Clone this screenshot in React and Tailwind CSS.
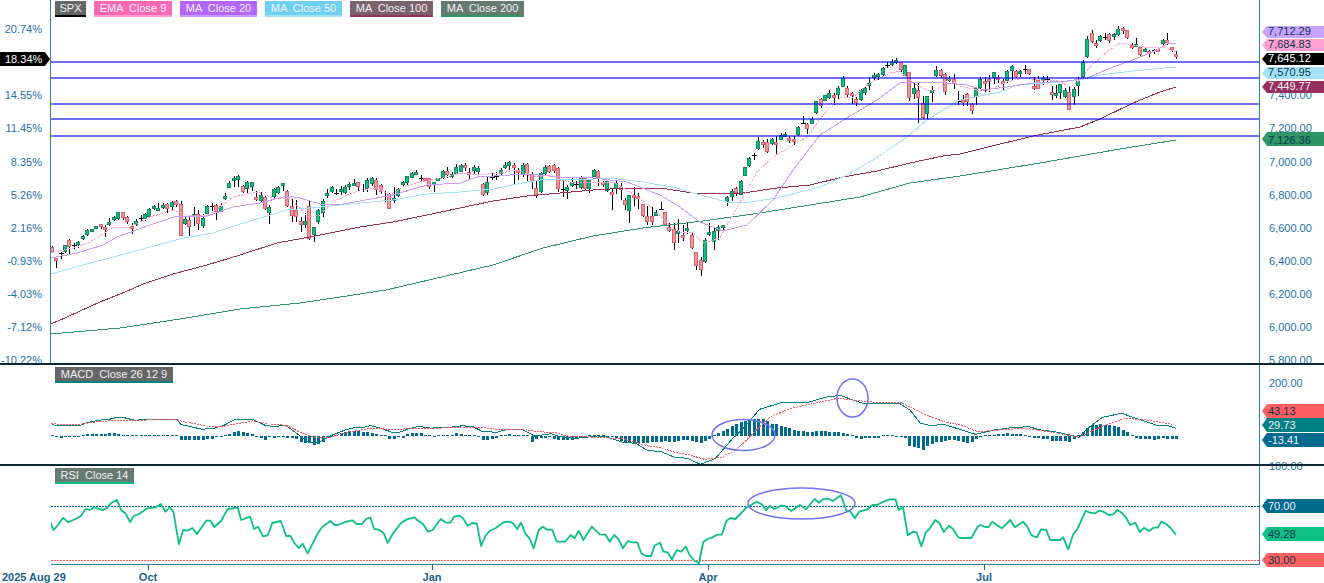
import React from 'react';

const barsA = `r 350 365 348 367|r 384 394 384 415|d 370 365 385|g 344 366 344 368|r 331 352 328 372|d 346 338 355|g 337 344 334 356|g 319 328 315 330|g 301 317 297 319|g 298 302 298 302|g 287 292 287 292|r 283 293 281 296|r 292 296 285 320|g 276 281 265 288|g 262 271 259 275|g 247 268 245 270|r 247 266 245 270|r 260 275 257 280|r 288 293 278 312|g 274 286 268 288|d 264 256 273|g 251 265 248 272|g 238 262 235 265|g 229 238 226 240|g 234 238 220 242|g 225 229 218 235|r 222 238 218 247|g 217 233 214 240|r 214 226 210 230|r 223 319 214 320|g 268 283 262 286|r 271 292 260 318|g 251 258 232 290|r 251 281 240 300|g 265 289 252 295|g 227 250 224 252|d 227 220 245|r 224 246 222 270|g 227 244 220 248|g 198 208 188 210|g 158 173 154 175|g 145 151 138 170|g 139 152 135 170|r 167 185 165 188|g 155 176 153 190|g 155 170 155 182|r 202 210 182 212|g 195 212 186 218|r 201 236 196 242|g 230 247 225 282|g 178 201 174 210|g 172 189 168 192|g 160 170 158 182|r 182 227 180 232|r 229 260 207 275|r 239 260 209 276|r 274 287 262 308|g 273 284 248 292|r 227 326 209 330|g 292 317 290 335|g 241 278 238 282|g 212 248 208 262|g 190 200 178 205|g 170 184 168 188|d 188 178 196|g 178 183 168 195|g 170 188 165 192|g 163 168 155 180|g 160 164 148 170|r 157 172 155 183|d 177 163 187|g 151 177 145 186|g 145 164 142 170|r 151 181 143 195|r 166 188 162 192|d 197 183 215|r 192 236 190 237|g 204 209 170 218|g 178 200 175 202|g 156 164 152 166|g 139 161 137 163|g 129 143 126 145|g 126 131 120 135|d 143 135 152|r 145 149 145 149|r 145 173 143 177|g 157 164 155 186|g 144 149 144 149|g 123 143 120 146|r 124 137 112 145|g 132 140 125 142|g 111 131 103 133|g 105 125 103 128|r 106 113 100 125|r 126 134 115 150|g 112 125 104 130|g 114 125 108 136|r 163 197 160 200|g 157 191 140 193|d 140 128 150|d 139 125 150|g 121 134 115 137|g 106 114 97 118|g 95 107 92 120|r 106 113 98 162|r 121 129 115 150|g 106 137 100 142|r 103 136 100 155|r 131 154 125 175|r 175 195 150 205|g 130 187 125 189|g 112 133 105 135|r 108 125 105 130|r 105 124 102 130|r 115 179 110 184|d 177 150 200|g 172 185 165 208|g 156 167 140 170|d 162 152 175|g 141 173 137 176|r 144 176 140 180|g 150 176 148 190|g 120 140 118 142|r 123 143 120 168|r 156 166 152 170|g 154 184 152 186|r 187 197 178 240|g 160 178 152 192|r 170 180 160 210|r 211 227 205 240|g 196 245 195 278|r 196 206 172 230|r 199 209 190 238|r 223 259 222 262|r 259 277 228 284|r 259 277 230 285|g 245 256 240 258|d 237 216 240|r 247 285 245 287|r 292 304 278 306|r 298 341 280 360|g 304 308 268 340|r 316 319 284 333|g 294 298 278 312|r 316 356 306 358|r 367 410 365 420|r 391 422 380 437|g 331 397 325 400|g 307 316 280 320|g 304 337 290 360|g 290 301 285 330`;
const barsC = `g 526 532 525 548|g 441 456 438 467|g 424 442 418 455|r 414 429 412 440|g 392 433 390 435|g 352 380 352 380|g 324 347 320 350|d 315 310 332|g 274 298 262 300|r 277 281 270 295|r 275 304 268 310|g 268 283 265 285|r 277 281 258 315|g 254 268 250 270|g 251 260 247 262|r 264 268 258 278|r 268 272 258 285|g 232 256 228 258|d 220 198 222|r 222 236 220 252|g 206 220 200 222|g 154 190 152 192|r 148 170 145 175|g 136 154 136 154|g 130 145 120 148|r 136 142 130 166|g 114 134 108 150|g 84 110 78 112|r 114 135 108 140|r 130 136 125 162|r 147 160 142 170|g 120 151 118 155|g 114 130 110 135|g 99 104 82 120|g 76 83 68 90|g 72 76 68 90|g 55 77 52 80|d 45 37 55|g 37 46 28 50|g 31 39 25 42|r 37 62 35 65|g 46 79 44 81|r 67 146 65 152|g 115 134 100 148|r 119 143 95 218|r 160 204 138 206|g 139 194 137 208|g 121 130 108 155|g 61 80 48 82|r 61 80 58 84|r 73 128 70 136|g 84 92 78 95|r 86 100 72 118`;
const barsD = `d 244 213 256|r 240 248 225 258|r 223 247 220 258|r 252 272 250 282|g 204 230 202 255|g 176 204 170 206|r 183 188 170 215|r 178 185 165 215|g 156 175 155 190|r 170 174 165 190|r 183 188 178 215|g 154 183 150 190|g 139 155 135 180|r 154 171 150 175|g 153 158 150 170|d 147 135 162|r 148 162 146 165|r 198 203 172 212|r 180 206 168 208|g 175 183 168 195|d 178 168 185|r 216 224 198 240|g 219 222 195 235|g 193 220 192 236|g 210 230 205 236|r 215 269 200 270|g 208 233 200 255|g 180 197 172 228|g 126 172 120 175|g 58 112 48 114|r 39 65 30 68|r 69 75 60 85|g 48 62 45 65|d 52 40 60|r 43 65 40 70|g 43 52 38 58|g 28 46 18 48|r 25 35 20 42|r 31 55 30 57|r 76 82 68 85|g 71 74 55 80|r 82 107 80 108|g 88 92 85 95|r 94 99 90 110|d 90 86 100|r 88 95 85 98|g 61 74 58 78|r 61 70 40 75|r 80 85 80 95|r 102 111 92 115`;

const parse = (s, off) => s.split('|').map((b) => {
  const p = b.split(' ');
  const n = p.slice(1).map((v) => off + Number(v) / 3);
  return p[0] === 'd' ? { k: 'd', y: n[0], wt: n[1], wb: n[2] } : { k: p[0], t: n[0], b: n[1], wt: n[2], wb: n[3] };
});
const bars = [...parse(barsA, 130), ...parse(barsC, 50), ...parse(barsD, 20)];
const barX = (i) => Math.round(51.7 + 4.444 * i);

const ema = '51,253 77,247 90,242 100,236 113,227 130,227 150,217 173,210 187,215 207,216 223,205 233,197 257,192 273,198 290,198 308,217 320,215 333,202 347,195 360,190 377,188 390,195 403,187 420,182 443,178 460,173 477,175 500,173 517,170 533,177 553,175 560,180 577,183 593,182 613,182 630,192 653,208 667,223 680,232 693,233 703,243 720,238 730,220 743,197 757,172 773,157 793,145 807,137 823,115 840,98 853,97 870,83 890,73 900,71 913,83 927,90 937,90 950,78 960,86 977,90 990,90 1007,82 1023,78 1040,80 1057,80 1070,87 1080,80 1090,67 1103,55 1120,43 1133,45 1150,48 1163,47 1176,52';
const ma20 = '51,258 77,253 103,245 117,237 150,225 177,216 207,216 233,207 260,203 287,196 300,198 320,204 343,204 360,201 393,195 427,185 460,183 477,177 527,174 560,177 593,178 627,182 660,195 680,207 700,222 723,231 747,225 773,200 793,170 820,135 847,118 877,100 900,83 933,82 967,85 983,90 1007,87 1033,83 1067,81 1087,78 1113,67 1133,60 1157,50 1167,44 1176,43';
const ma50 = '51,274 83,265 117,256 150,247 180,239 213,233 240,224 267,216 287,210 320,207 360,203 393,200 427,194 460,192 493,189 527,182 547,179 593,179 610,178 643,182 677,188 693,193 727,202 750,202 777,198 820,187 847,175 873,160 907,137 927,120 943,110 960,100 1000,92 1017,85 1060,82 1080,80 1100,75 1133,71 1176,67';
const ma100 = '51,324 67,317 100,302 125,292 143,284 173,274 207,265 240,255 277,243 310,237 360,227 393,222 427,215 460,208 493,201 527,196 560,193 593,190 610,189 643,188 660,188 693,193 717,194 743,193 777,188 810,185 843,177 877,171 910,163 943,156 960,154 980,149 1033,136 1080,127 1100,119 1133,103 1160,92 1176,87';
const ma200 = '51,334 120,328 180,319 240,309 300,303 360,294 386,290 493,265 543,248 593,236 643,228 703,221 760,213 810,205 860,197 910,183 960,176 1040,163 1120,149 1176,140';

const conv = (s, ox, sx, oy) => s.trim().split(/\s+/).map((p) => {
  const [a, b] = p.split(',').map(Number);
  return `${(ox + a / sx).toFixed(1)},${(oy + b / 3).toFixed(1)}`;
}).join(' ');

const macdTeal = conv('122,190 130,196 190,196 205,189 232,181 260,178 275,173 295,173 320,181 345,178 420,178 430,194 450,199 480,208 510,204 530,197 560,178 600,178 630,196 645,199 680,197 700,215 730,245 755,248 790,225 820,210 845,202 865,202 880,197 900,203 930,216 950,216 975,205 995,199 1025,205 1045,201 1075,201 1100,197 1125,201 1145,214 1180,217 1205,208 1240,208 1270,228 1310,221 1330,230 1370,235 1420,228 1445,232 1480,247 1510,250 1540,272 1568,274', 0, 2.376, 360) + ' ' + conv('35,292 65,295 95,313 130,296 170,238 200,200 235,148 290,127 350,127 390,112 425,106 460,122 480,130 540,130 565,130 590,150 615,190 640,197 670,193 700,205 745,223 790,210 830,203 870,200 900,210 940,217 990,232 1010,205 1045,172 1090,160 1130,178 1170,195 1200,197 1218,205', 660, 2.361, 360);
const macdRed = conv('122,189 135,193 190,193 230,185 285,181 320,181 415,178 440,186 490,198 530,199 570,190 600,183 640,192 680,196 710,215 745,232 780,233 830,215 880,205 930,208 990,206 1050,204 1140,201 1180,208 1240,208 1280,215 1320,218 1350,228 1420,232 1480,236 1540,258 1568,262', 0, 2.376, 360) + ' ' + conv('30,275 70,285 105,298 145,292 180,270 220,220 260,170 310,145 370,128 420,115 470,122 520,128 570,128 620,160 670,185 710,195 750,215 800,210 860,205 920,215 990,232 1050,195 1100,175 1150,180 1210,193', 660, 2.361, 360);
const hist = [0,-1,-2,-1,-1,-1,-1,0,2,2,2,2,2,3,3,2,1,0,0,0,0,0,0,1,0,0,1,0,0,-4,-4,-4,-4,-4,-4,-3,-3,-1,-1,0,2,4,5,4,3,2,-1,-2,-4,-1,-2,-1,-1,-2,-2,-3,-6,-7,-7,-9,-8,-6,-2,-1,1,3,4,5,5,5,4,4,3,2,1,0,-3,-3,-1,-2,2,3,3,3,1,0,-1,0,1,1,1,3,2,1,0,0,-1,-4,-4,-3,-2,1,1,2,1,0,0,0,-6,-3,-2,-2,-1,-3,-4,-4,-4,-4,-3,-2,-1,0,0,1,0,-1,-1,-2,-5,-6,-6,-7,-7,-7,-7,-6,-6,-6,-5,-6,-6,-5,-4,-4,-5,-6,-7,-5,-3,0,3,5,7,10,12,14,15,16,17,17,17,15,12,12,10,9,8,6,5,5,4,4,5,5,5,4,4,4,3,2,0,-2,-3,-2,-2,-2,-2,0,0,0,-1,-1,-2,-10,-11,-12,-14,-10,-8,-6,-6,-5,-4,-4,-5,-6,-7,-6,-3,-1,0,1,1,2,2,3,2,2,2,0,-1,-2,-2,-3,-3,-5,-5,-5,-5,-6,-3,0,4,8,11,11,12,11,11,10,9,6,4,1,-2,-3,-3,-3,-4,-3,-2,-3,-3,-3];

const rsi = conv('120,188 127,210 138,195 150,173 162,187 178,178 192,168 204,146 213,150 224,142 235,147 245,150 255,143 265,128 278,120 288,150 298,160 309,186 318,168 330,162 350,145 370,142 382,132 393,155 403,142 412,155 425,253 435,210 446,212 457,204 468,222 490,182 500,182 509,201 525,183 541,147 565,143 573,180 594,170 604,207 613,200 625,229 636,226 647,189 667,183 680,228 690,228 700,250 710,264 719,251 731,280 745,245 755,220 765,202 785,183 795,195 803,195 820,186 837,181 848,192 860,192 871,176 880,173 889,207 900,209 912,220 921,249 933,222 952,190 965,179 985,172 992,181 1005,192 1017,215 1028,210 1047,177 1060,188 1070,188 1079,170 1092,167 1100,175 1111,197 1122,189 1133,191 1143,258 1153,228 1164,212 1177,205 1197,186 1210,185 1219,190 1229,207 1238,188 1248,220 1258,235 1268,265 1280,210 1290,200 1300,209 1312,209 1323,245 1343,245 1356,225 1365,235 1375,213 1386,240 1406,200 1425,223 1439,224 1449,245 1459,225 1470,238 1480,265 1492,243 1501,247 1514,247 1524,280 1535,288 1547,288 1555,257 1568,248', 0, 2.376, 460) + ' ' + conv('8,275 18,277 28,298 40,270 50,275 61,260 70,285 82,303 92,310 102,247 112,237 124,232 135,224 146,224 157,182 167,174 178,177 205,142 228,125 240,133 250,150 260,138 270,147 285,137 295,138 310,153 330,135 345,148 365,117 375,128 385,118 397,116 408,123 427,106 440,152 450,155 460,175 470,155 490,148 502,135 512,135 523,128 542,118 556,118 563,150 574,142 585,226 597,215 606,218 617,259 627,218 637,205 650,180 660,190 670,216 682,197 692,207 704,232 712,234 735,234 750,200 757,195 768,201 776,201 784,185 795,195 807,205 827,180 838,202 857,185 867,200 877,226 890,232 899,208 912,210 921,240 945,240 952,232 964,268 975,224 985,208 1005,152 1015,158 1027,160 1037,152 1047,155 1060,165 1070,163 1080,150 1090,158 1100,172 1110,195 1122,188 1133,216 1143,203 1155,213 1165,203 1175,203 1184,185 1195,192 1205,203 1218,224', 660, 2.361, 460);

const hLines = [62, 78, 104, 119, 136];
// The rows behind the current-value tags stay empty: those grid values are covered in the chart.
const pctLabels = ['20.74%', '', '14.55%', '11.45%', '8.35%', '5.26%', '2.16%', '-0.93%', '-4.03%', '-7.12%', '-10.22%'];
const priceLabels = ['', '', '7,400.00', '7,200.00', '7,000.00', '6,800.00', '6,600.00', '6,400.00', '6,200.00', '6,000.00', '5,800.00'];

const tagShape = 'absolute left-[2px] right-0 pl-[6px] [clip-path:polygon(0_50%,5px_0,100%_0,100%_100%,5px_100%)]';

const Tag = ({ className, children }) => <div className={`${tagShape} ${className}`}>{children}</div>;

const Legend = ({ className, children }) => (
  <div className={`h-4 leading-[14px] border-b-2 text-center whitespace-pre text-[#f0f0f8] ${className}`}>{children}</div>
);

const Candles = () => (
  <g shapeRendering="crispEdges">
    {bars.map((b, i) => {
      const x = barX(i);
      if (b.k === 'd') {
        return (
          <g key={i}>
            <rect x={x} y={Math.round(b.wt)} width="1" height={Math.max(1, Math.round(b.wb - b.wt))} fill="#000" />
            <rect x={x - 2} y={Math.round(b.y)} width="5" height="1" fill="#000" />
          </g>
        );
      }
      const t = Math.round(b.t);
      const h = Math.max(3, Math.round(b.b - b.t));
      return (
        <g key={i}>
          <rect x={x} y={Math.round(b.wt)} width="1" height={Math.max(1, Math.round(b.wb - b.wt))} fill="#000" />
          <rect x={x - 1.5} y={t + 0.5} width="3" height={h - 1}
            fill={b.k === 'g' ? '#0cc084' : '#e89a9a'} stroke={b.k === 'g' ? '#17855f' : '#d9636c'} strokeWidth="1" />
        </g>
      );
    })}
  </g>
);

export default function App() {
  return (
    <div className="w-[1324px] h-[583px] overflow-hidden bg-white flex flex-col text-[11px] font-['Liberation_Sans',Arial,sans-serif]">
      {/* price panel */}
      <div className="h-[363px] flex shrink-0">
        <div className="relative w-[51px] border-r border-[#34809f] overflow-hidden text-[#1d71a8]">
          <div className="pt-[13px] pr-[8px] flex flex-col items-end">
            {pctLabels.map((l, i) => <div key={i} className="h-[33.15px] leading-[33px]">{l}</div>)}
          </div>
          <div className="absolute top-[52px] left-0 w-[50px] h-[14px] pl-[5px] leading-[14px] bg-black text-white [clip-path:polygon(0_0,calc(100%-5px)_0,100%_50%,calc(100%-5px)_100%,0_100%)]">18.34%</div>
        </div>
        <div className="relative w-[1208px]">
          <svg width="1208" height="363" viewBox="51 0 1208 363" className="block">
            <Candles />
            <g fill="none" strokeWidth="1" shapeRendering="crispEdges">
              <polyline points={ma200} stroke="#2f9565" />
              <polyline points={ma100} stroke="#96305f" />
              <polyline points={ma50} stroke="#a3e2f5" />
              <polyline points={ma20} stroke="#c79bff" />
              <polyline points={ema} stroke="#ff9dd0" strokeDasharray="2 1" />
            </g>
            {hLines.map((y) => <rect key={y} x="51" y={y - 1} width="1208" height="2" fill="#0000f0" opacity="0.56" shapeRendering="crispEdges" />)}
          </svg>
          <div className="absolute top-[1px] left-[4px] flex gap-2">
            <Legend className="w-[31px] bg-[#666666] border-black">SPX</Legend>
            <Legend className="w-[78px] bg-[#ff69b4] border-[#ff9dd0]">EMA  Close 9</Legend>
            <Legend className="w-[77px] bg-[#b266ff] border-[#c79bff]">MA  Close 20</Legend>
            <Legend className="w-[77px] bg-[#70d0f0] border-[#a3e2f5]">MA  Close 50</Legend>
            <Legend className="w-[83px] bg-[#7a626a] border-[#96305f]">MA  Close 100</Legend>
            <Legend className="w-[83px] bg-[#667a70] border-[#2f9565]">MA  Close 200</Legend>
          </div>
        </div>
        <div className="relative flex-1 border-l border-[#34809f] overflow-hidden text-[#1d71a8]">
          <div className="pt-[13px] pl-[9px] flex flex-col">
            {priceLabels.map((l, i) => <div key={i} className="h-[33.15px] leading-[33px]">{l}</div>)}
          </div>
          <Tag className="top-[26px] h-[12px] leading-[11px] bg-[#c8a2ff] text-[#0b3550]">7,712.29</Tag>
          <Tag className="top-[39px] h-[12px] leading-[11px] bg-[#ffa0d0] text-[#0b3550]">7,684.83</Tag>
          <Tag className="top-[53px] h-[12px] leading-[11px] bg-black text-white">7,645.12</Tag>
          <Tag className="top-[67px] h-[12px] leading-[11px] bg-[#a3e2f5] text-[#0b3550]">7,570.95</Tag>
          <Tag className="top-[81px] h-[12px] leading-[11px] bg-[#96305f] text-[#f0f0f8]">7,449.77</Tag>
          <Tag className="top-[132px] h-[14px] leading-[17px] bg-[#2f9565] text-[#0b3550]">7,126.36</Tag>
        </div>
      </div>
      <div className="relative z-10 h-[2px] shrink-0 bg-[#0a2a3a]" />

      {/* MACD panel */}
      <div className="h-[99px] flex shrink-0">
        <div className="w-[51px]" />
        <div className="relative w-[1208px]">
          <svg width="1208" height="99" viewBox="51 365 1208 99" className="block">
            <g shapeRendering="crispEdges" fill="#006b8f">
              {hist.map((v, i) => (
                <rect key={i} x={barX(i) - 1} y={v >= 0 ? 436 - Math.max(v, 1) : 436} width="3" height={Math.max(Math.abs(v), 1)} />
              ))}
            </g>
            <g fill="none" strokeWidth="1" shapeRendering="crispEdges">
              <polyline points={macdTeal} stroke="#008080" />
              <polyline points={macdRed} stroke="#ff5a5a" strokeDasharray="2 1" />
            </g>
            <g fill="none" stroke="#7272f2" strokeWidth="1.5">
              <ellipse cx="743.5" cy="435" rx="31.5" ry="15.5" />
              <ellipse cx="852.5" cy="398" rx="15.5" ry="19" />
            </g>
          </svg>
          <div className="absolute top-[2px] left-[4px] flex">
            <Legend className="w-[118px] bg-[#666666] border-[#008080]">MACD  Close 26 12 9</Legend>
          </div>
        </div>
        <div className="relative flex-1 border-l border-[#34809f] text-[#1d71a8]">
          <div className="pt-[12px] pl-[9px] flex flex-col">
            <div className="h-[83px] leading-[12px]">200.00</div>
            <div className="h-[12px] leading-[12px]">100.00</div>
          </div>
          <Tag className="top-[39px] h-[14px] leading-[14px] bg-[#ff5f5f] text-[#0b3550]">43.13</Tag>
          <Tag className="top-[53px] h-[14px] leading-[14px] bg-[#008080] text-[#f0f0f8]">29.73</Tag>
          <Tag className="top-[68px] h-[14px] leading-[14px] bg-[#006b8f] text-[#f0f0f8]">-13.41</Tag>
        </div>
      </div>
      <div className="relative z-10 h-[2px] shrink-0 bg-[#0a2a3a]" />

      {/* RSI panel */}
      <div className="h-[99px] flex shrink-0">
        <div className="w-[51px]" />
        <div className="relative w-[1208px] border-b border-[#2e7fa0]">
          <svg width="1208" height="98" viewBox="51 466 1208 98" className="block">
            <g fill="none" strokeWidth="1" shapeRendering="crispEdges">
              <line x1="51" x2="1259" y1="506.5" y2="506.5" stroke="#006b8f" strokeDasharray="2 1" />
              <line x1="51" x2="1259" y1="560.5" y2="560.5" stroke="#ff5a5a" strokeDasharray="2 1" />
            </g>
            <polyline points={rsi} fill="none" stroke="#0cc084" strokeWidth="1.8" strokeLinejoin="round" />
            <ellipse cx="801.5" cy="503.5" rx="53.5" ry="15.5" fill="none" stroke="#7272f2" strokeWidth="1.5" />
          </svg>
          <div className="absolute top-[2px] left-[4px] flex">
            <Legend className="w-[79px] bg-[#667a70] border-[#0cc084]">RSI  Close 14</Legend>
          </div>
        </div>
        <div className="relative flex-1 border-l border-[#34809f]">
          <Tag className="top-[33px] h-[14px] leading-[14px] bg-[#006b8f] text-[#f0f0f8]">70.00</Tag>
          <Tag className="top-[61px] h-[14px] leading-[14px] bg-[#0cc084] text-[#0b3550]">49.28</Tag>
          <Tag className="top-[87px] h-[14px] leading-[14px] bg-[#ff5f5f] text-[#0b3550]">30.00</Tag>
        </div>
      </div>

      {/* time axis */}
      <div className="flex flex-1 font-bold text-[#1b6288]">
        <div className="w-[128px] pl-[2px] pt-[5px] leading-[14px] whitespace-nowrap">2025 Aug 29</div>
        <TimeTick label="Oct" className="mr-[244px]" />
        <TimeTick label="Jan" className="mr-[236px]" />
        <TimeTick label="Apr" className="mr-[236px]" />
        <TimeTick label="Jul" />
      </div>
    </div>
  );
}

function TimeTick({ label, className = '' }) {
  return (
    <div className={`w-10 flex flex-col items-center ${className}`}>
      <div className="w-px h-[5px] bg-[#1b6288]" />
      <div className="leading-[14px]">{label}</div>
    </div>
  );
}
